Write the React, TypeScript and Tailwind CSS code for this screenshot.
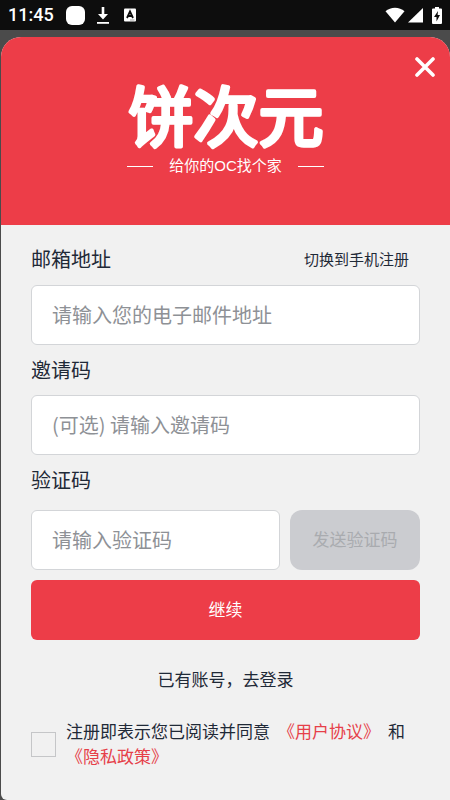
import { useState } from "react";

function StatusBar() {
  return (
    <header className="flex h-[30px] items-center bg-[#0d0d0d] pr-2 pl-2 text-white">
      <time className="font-['Roboto',sans-serif] text-[18px] leading-6 font-medium">11:45</time>
      <span className="ml-3 h-[19px] w-[19px] rounded-md bg-white" />
      <svg className="ml-3 h-5 w-3" viewBox="0 0 12 20" fill="currentColor" aria-hidden="true">
        <path d="M4.700 2h2.600v7h3.700L6 14.500 1 9h3.700z" />
        <path d="M0 17h12v1.800H0z" />
      </svg>
      <svg className="ml-[15px] h-[14px] w-3" viewBox="0 0 12 14" aria-hidden="true">
        <rect y="0.500" width="12" height="13" rx="1" fill="#fff" />
        <path d="M3 10 6 3.500 9 10M4.200 8h3.600" fill="none" stroke="#0d0d0d" strokeWidth="1.800" />
        <path d="M6 12h4.500" stroke="#888" strokeWidth="0.800" />
      </svg>
      <svg className="ml-auto h-4 w-5" viewBox="0 0 20 16" fill="currentColor" aria-hidden="true">
        <path d="M.5 4.300C5.500-.4 14.500-.4 19.500 4.300L10 15.500z" />
      </svg>
      <svg className="ml-[3px] h-4 w-[15px]" viewBox="0 0 15 16" fill="currentColor" aria-hidden="true">
        <path d="M15 1v14.500H0z" />
      </svg>
      <svg className="ml-[9px] h-[17px] w-[10px]" viewBox="0 0 10 17" aria-hidden="true">
        <path d="M3 0h4v1.500h2a1 1 0 0 1 1 1V16a1 1 0 0 1-1 1H1a1 1 0 0 1-1-1V2.500a1 1 0 0 1 1-1h2z" fill="#fff" />
        <path d="M6 4 2 10h2.500v4.500L8 8H5.600z" fill="#0d0d0d" />
      </svg>
    </header>
  );
}

const fieldClass =
  "h-[60px] w-full min-w-0 rounded-md border border-[#d3d5d8] bg-white px-5 pb-[2px] text-xl text-[#1f2937] outline-none placeholder:text-[#8e9196]";

export default function App() {
  const [agreed, setAgreed] = useState(false);

  return (
    <div className="flex min-h-screen flex-col bg-[#4b4b4b] font-['Noto_Sans_CJK_SC',sans-serif] text-[#1f2937]">
      <StatusBar />
      <main className="mt-[7px] ml-px flex grow flex-col overflow-hidden rounded-t-[20px] rounded-bl-md bg-[#f1f1f1]">
        <div className="relative flex h-[188px] flex-col items-center bg-[#ed3d48] pt-[42px] text-white">
          <button type="button" aria-label="关闭" className="absolute top-5 right-[15px]">
            <svg className="h-5 w-5" viewBox="0 0 20 20" fill="none" stroke="currentColor" strokeWidth="3.600" strokeLinecap="round" aria-hidden="true">
              <path d="M2 2l16 16M18 2 2 18" />
            </svg>
          </button>
          <h1>
            <svg className="block h-[76px] w-[220px] font-['Liberation_Sans','Noto_Sans_CJK_SC',sans-serif]" viewBox="0 0 220 76">
              <text
                x="110"
                y="62"
                textAnchor="middle"
                fontSize="65"
                fontWeight="400"
                fill="currentColor"
                stroke="currentColor"
                strokeWidth="4"
                strokeLinejoin="round"
              >
                饼次元
              </text>
            </svg>
          </h1>
          <p className="flex items-center gap-4 font-['Liberation_Sans','Noto_Sans_CJK_SC',sans-serif] text-[15px] leading-[22px]">
            <span className="h-px w-[26px] bg-white" />
            给你的OC找个家
            <span className="h-px w-[26px] bg-white" />
          </p>
        </div>

        <form className="flex flex-col px-[30px] pt-[19px]" onSubmit={(e) => e.preventDefault()}>
          <div className="flex items-center justify-between pr-[11px]">
            <label htmlFor="email" className="text-xl leading-[30px]">邮箱地址</label>
            <button type="button" className="text-[15px] leading-[30px]">切换到手机注册</button>
          </div>
          <input id="email" type="email" placeholder="请输入您的电子邮件地址" className={`mt-[11px] ${fieldClass}`} />

          <label htmlFor="invite" className="mt-[10px] text-xl leading-[30px]">邀请码</label>
          <input id="invite" type="text" placeholder="(可选) 请输入邀请码" className={`mt-[10px] ${fieldClass}`} />

          <label htmlFor="code" className="mt-[10px] text-xl leading-[30px]">验证码</label>
          <div className="mt-[15px] flex gap-[10px]">
            <input id="code" type="text" placeholder="请输入验证码" className={fieldClass} />
            <button type="button" disabled className="h-[60px] w-[130px] shrink-0 rounded-xl bg-[#cbccd0] pb-[2px] text-[17px] text-[#a9abaf]">
              发送验证码
            </button>
          </div>

          <button type="submit" className="mt-[10px] h-[60px] rounded-md bg-[#ed3d48] pb-[2px] text-[17px] text-white">继续</button>
          <a href="#login" className="mt-[26px] self-center text-[17px] leading-[25px]">已有账号，去登录</a>

          <div className="mt-[27px] flex items-center gap-[10px]">
            <input
              id="agree"
              type="checkbox"
              checked={agreed}
              onChange={(e) => setAgreed(e.target.checked)}
              className="mt-[2px] h-[25px] w-[25px] shrink-0 appearance-none border border-[#c5c6c8] checked:bg-[#ed3d48]"
            />
            <label htmlFor="agree" className="text-[17px] leading-[25px]">
              注册即表示您已阅读并同意
              <a href="#terms" className="mx-2 text-[#e63f49]">《用户协议》</a>
              和
              <br />
              <a href="#privacy" className="text-[#e63f49]">《隐私政策》</a>
            </label>
          </div>
        </form>
      </main>
    </div>
  );
}
